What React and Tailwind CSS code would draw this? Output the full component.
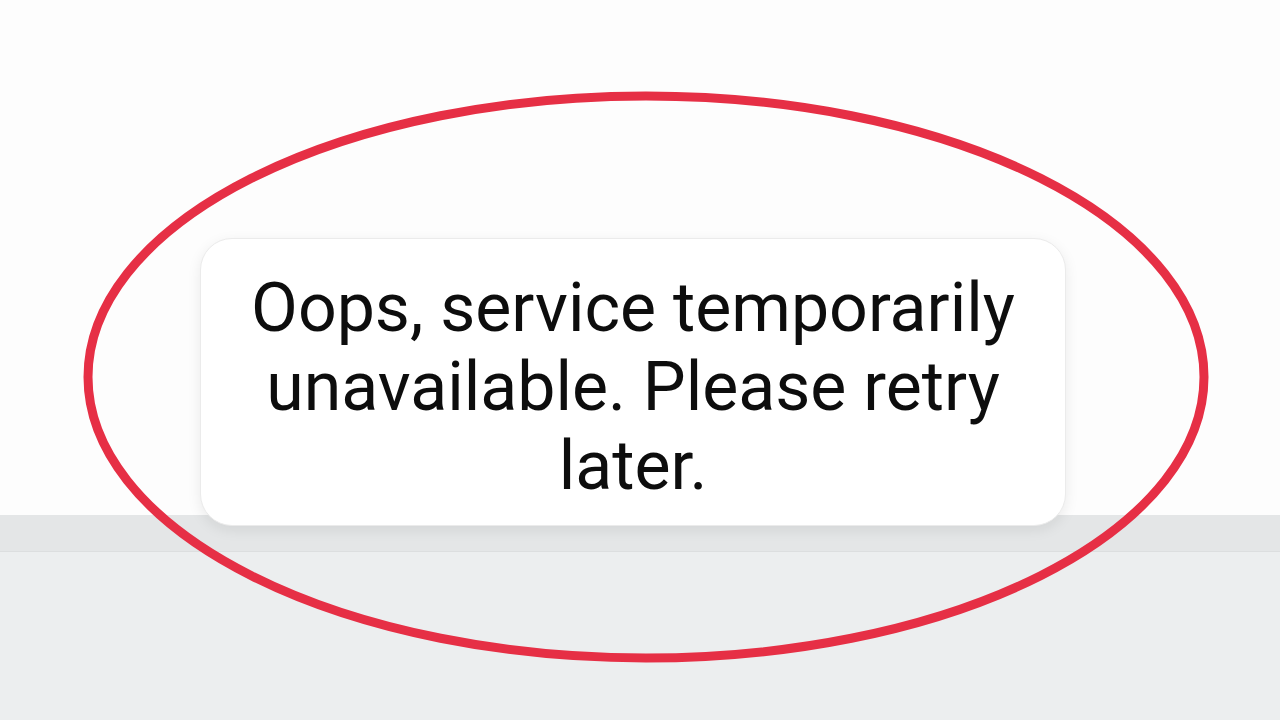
export default function App() {
  return (
    <div className="relative w-[1280px] h-[720px] overflow-hidden bg-white font-['Roboto',sans-serif]">
      {/* page behind the toast */}
      <div className="flex flex-col h-full">
        <div className="h-[515px] bg-[#fdfdfd]" />
        <div className="h-[37px] bg-[#e4e6e7] border-b border-[#dcdedf]" />
        <div className="flex-1 bg-[#eceeef]" />
      </div>

      {/* toast */}
      <div className="absolute left-[200px] top-[238px] w-[866px] h-[288px] rounded-[32px] bg-white border border-[#ebebeb] shadow-[0_4px_14px_rgba(0,0,0,0.08)] flex items-center justify-center pt-[10px]">
        <p className="text-[68px] leading-[79px] text-[#0d0d0d] text-center px-6">
          Oops, service temporarily unavailable. Please retry later.
        </p>
      </div>

      {/* red marker ellipse */}
      <svg className="absolute inset-0" width="1280" height="720" viewBox="0 0 1280 720">
        <ellipse cx="646" cy="377" rx="558" ry="281" fill="none" stroke="#e62f45" strokeWidth="9" />
      </svg>
    </div>
  )
}
